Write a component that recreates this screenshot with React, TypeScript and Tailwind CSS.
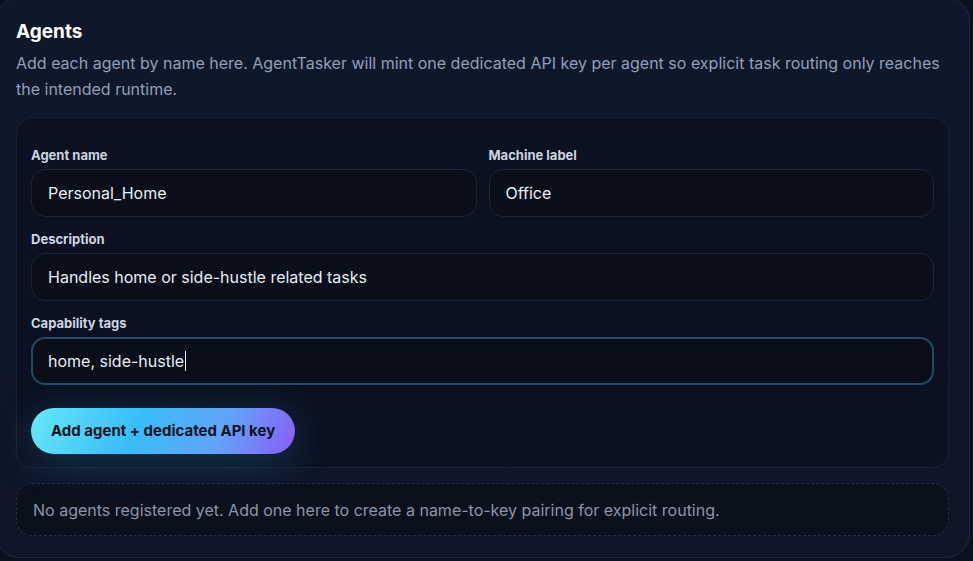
import React, { useState } from 'react';

const Field: React.FC<{ label: string; value: string; focused?: boolean; className?: string }> = ({ label, value, focused, className }) => {
    return (
        <label className={`flex flex-col ${className ?? ''}`}>
            <span className="text-[13px] leading-4 font-bold text-[#cbd5e1] mb-1.5">{label}</span>
            <div
                className={`h-12 flex items-center rounded-[14px] bg-[#090e19] px-4 text-[16px] text-[#e8eef6] ${
                    focused ? 'border-2 border-[#1f4b66] px-[15px]' : 'border border-[#1c2535]'
                }`}
            >
                <span>{value}</span>
                {focused && <span className="w-px h-[20px] bg-[#e8eef6] ml-px" />}
            </div>
        </label>
    );
};

const App: React.FC = () => {
    const [agents] = useState<string[]>([]);

    return (
        <div className="min-h-[561px] w-[973px] overflow-hidden bg-[#0a101d] font-['Inter',sans-serif]">
            <div className="ml-[-5px] mr-[3px] mt-[-3px] rounded-[24px] border border-[#1b2a44] bg-[linear-gradient(180deg,#0f172a_0%,#0d1527_100%)] px-5 pt-5 pb-[21px]">
                <h2 className="text-[19px] leading-7 font-bold text-white">Agents</h2>
                <p className="mt-1 text-[16px] leading-[26px] text-[#8fa0b8]">
                    Add each agent by name here. AgentTasker will mint one dedicated API key per agent so explicit task routing only reaches the intended runtime.
                </p>

                <div className="mt-[15px] rounded-[16px] border border-[#182235] bg-[#0b1120] px-[14px] pt-[29px] pb-[13px]">
                    <div className="grid grid-cols-2 gap-x-3 gap-y-[14px]">
                        <Field label="Agent name" value="Personal_Home" />
                        <Field label="Machine label" value="Office" />
                        <Field className="col-span-2" label="Description" value="Handles home or side-hustle related tasks" />
                        <Field className="col-span-2" label="Capability tags" value="home, side-hustle" focused />
                    </div>
                    <button className="mt-[23px] h-[46px] rounded-full bg-[linear-gradient(115deg,#67e8f9_0%,#38bdf8_40%,#60a5fa_70%,#8b5cf6_100%)] px-5 text-[15px] font-bold text-[#0b1220] shadow-[0_8px_40px_rgba(56,189,248,0.22)]">
                        Add agent + dedicated API key
                    </button>
                </div>

                {agents.length === 0 && (
                    <div className="mt-[15px] h-[53px] flex items-center rounded-[16px] border border-dashed border-[#223049] bg-[#0a101c] px-4 text-[16px] text-[#8b96a8]">
                        No agents registered yet. Add one here to create a name-to-key pairing for explicit routing.
                    </div>
                )}
            </div>
        </div>
    );
};

export default App;
